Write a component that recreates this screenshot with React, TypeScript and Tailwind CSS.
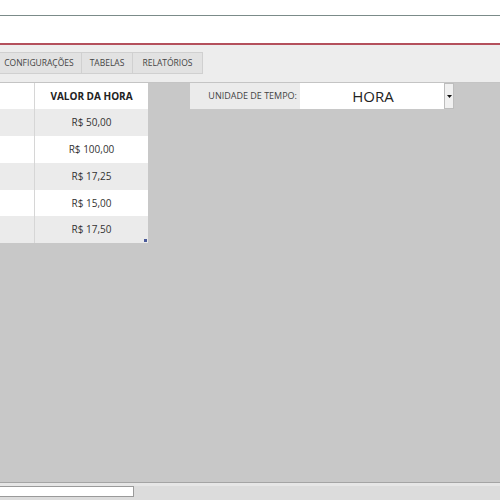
import React from "react";

const rows = [
  { v: "R$ 50,00", bg: "bg-[#ebebeb]", h: "h-[27px]" },
  { v: "R$ 100,00", bg: "bg-white", h: "h-[27px]" },
  { v: "R$ 17,25", bg: "bg-[#ebebeb]", h: "h-[27px]" },
  { v: "R$ 15,00", bg: "bg-white", h: "h-[26px]" },
  { v: "R$ 17,50", bg: "bg-[#ebebeb]", h: "h-[27px]" },
];

export default function App() {
  return (
    <div
      className="w-[500px] h-[500px] flex flex-col bg-[#c8c8c8] overflow-hidden"
      style={{ fontFamily: '"Open Sans", "Noto Sans", sans-serif' }}
    >
      {/* top bar */}
      <div className="h-[16px] bg-white border-b border-[#7b8b89] shrink-0" />
      <div className="h-[29px] bg-white border-b-2 border-[#b4505c] shrink-0" />
      {/* tabs area */}
      <div className="h-[38px] bg-[#ededed] border-b border-[#c4c4c4] shrink-0 flex items-start pt-[7px]">
        <div className="flex h-[22px] ml-[-4px]">
          <div className="h-full w-[86px] flex items-center justify-center bg-[#e2e2e2] border border-[#d0d0d0] text-[8.5px] text-[#444]">
            CONFIGURAÇÕES
          </div>
          <div className="h-full w-[51px] flex items-center justify-center bg-[#e2e2e2] border border-l-0 border-[#d0d0d0] text-[8.5px] text-[#444]">
            TABELAS
          </div>
          <div className="h-full w-[70px] flex items-center justify-center bg-[#e2e2e2] border border-l-0 border-[#d0d0d0] text-[8.5px] text-[#444]">
            RELATÓRIOS
          </div>
        </div>
      </div>
      {/* header row */}
      <div className="h-[26px] flex shrink-0">
        <div className="w-[35px] bg-white border-r border-[#d6d6d6]" />
        <div className="w-[113px] bg-white flex items-center justify-center text-[10px] font-bold text-[#222]">
          VALOR DA HORA
        </div>
        <div className="w-[42px]" />
        <div className="w-[110px] bg-[#ebebeb] flex items-center justify-end pr-[3px] text-[9px] text-[#444]">
          UNIDADE DE TEMPO:
        </div>
        <div className="w-[144px] bg-white flex items-center justify-center text-[15px] text-[#222] pl-[2px]">
          HORA
        </div>
        <div className="w-[10px] bg-[#f0f0f0] border border-[#bdbdbd] flex items-center justify-center">
          <svg width="5" height="3" viewBox="0 0 5 3">
            <path d="M0 0 L5 0 L2.5 3 Z" fill="#111" />
          </svg>
        </div>
        <div className="flex-1" />
      </div>
      {/* data rows */}
      <div className="flex flex-col shrink-0 relative w-[148px]">
        {rows.map((r, i) => (
          <div key={i} className={`flex ${r.h} ${r.bg}`}>
            <div className="w-[35px] border-r border-[#d6d6d6]" />
            <div className="w-[113px] flex items-center justify-center text-[10px] text-[#333]">
              {r.v}
            </div>
          </div>
        ))}
        <div className="absolute right-[1px] bottom-[1px] w-[3px] h-[3px] bg-[#4a5a9a]" />
      </div>
      <div className="flex-1" />
      {/* bottom */}
      <div className="h-[18px] shrink-0 border-t border-[#a4a4a4] bg-[#dcdcdc] flex flex-col">
        <div className="h-[3px] bg-[#e6e6e6]" />
        <div className="h-[11px] w-[134px] bg-white border border-[#9a9a9a] border-l-0" />
      </div>
    </div>
  );
}
